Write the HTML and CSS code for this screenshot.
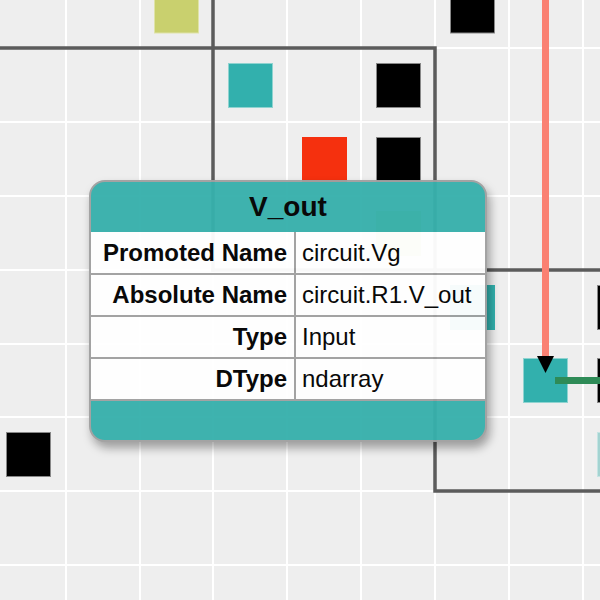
FILE: index.html
```html
<!DOCTYPE html>
<html>
<head>
<meta charset="utf-8">
<link rel="stylesheet" href="styles.css">
</head>
<body>
<div class="canvas">
  <svg class="n2" width="600" height="600" viewBox="0 0 600 600">
    <rect x="0" y="0" width="600" height="600" fill="#eeeeee"/>
    <g stroke="#ffffff" stroke-width="2">
      <line x1="66" y1="0" x2="66" y2="600"/>
      <line x1="140" y1="0" x2="140" y2="600"/>
      <line x1="213" y1="0" x2="213" y2="600"/>
      <line x1="287" y1="0" x2="287" y2="600"/>
      <line x1="361" y1="0" x2="361" y2="600"/>
      <line x1="435" y1="0" x2="435" y2="600"/>
      <line x1="509" y1="0" x2="509" y2="600"/>
      <line x1="583" y1="0" x2="583" y2="600"/>
      <line x1="0" y1="48" x2="600" y2="48"/>
      <line x1="0" y1="122" x2="600" y2="122"/>
      <line x1="0" y1="196" x2="600" y2="196"/>
      <line x1="0" y1="270" x2="600" y2="270"/>
      <line x1="0" y1="344" x2="600" y2="344"/>
      <line x1="0" y1="417" x2="600" y2="417"/>
      <line x1="0" y1="491" x2="600" y2="491"/>
      <line x1="0" y1="565" x2="600" y2="565"/>
    </g>
    <g stroke="#aaaaaa" stroke-width="1">
      <rect x="154.5" y="-11" width="44" height="44" fill="#c9d06e" stroke="#dfe3a8"/>
      <rect x="450.5" y="-11" width="44" height="44" fill="#000000" stroke="#888888"/>
      <rect x="228.5" y="63.5" width="44" height="44" fill="#32b0ad" stroke="#8fd3d0"/>
      <rect x="376.5" y="63.5" width="44" height="44" fill="#000000" stroke="#888888"/>
      <rect x="302.5" y="137.5" width="44" height="44" fill="#f5300e" stroke="#f5300e"/>
      <rect x="376.5" y="137.5" width="44" height="44" fill="#000000" stroke="#888888"/>
      <rect x="376.5" y="211.5" width="44" height="44" fill="#c9d06e" stroke="#c9d06e"/>
      <rect x="450.5" y="285.5" width="44" height="44" fill="#32b0ad" stroke="#32b0ad"/>
      <rect x="597.5" y="285.5" width="44" height="44" fill="#000000" stroke="#888888"/>
      <rect x="523.5" y="358.5" width="44" height="44" fill="#32b0ad" stroke="#8fd3d0"/>
      <rect x="597.5" y="358.5" width="44" height="44" fill="#000000" stroke="#888888"/>
      <rect x="6.5" y="432.5" width="44" height="44" fill="#000000" stroke="#888888"/>
      <rect x="597.5" y="432.5" width="44" height="44" fill="#a3d3d1" stroke="#c6e4e3"/>
    </g>
    <g stroke="#5b5b5b" stroke-width="3.5" fill="none" stroke-linecap="square">
      <polyline points="0,48 435,48 435,491 600,491"/>
      <line x1="213" y1="0" x2="213" y2="270"/>
      <line x1="213" y1="270" x2="600" y2="270"/>
    </g>
    <line x1="545.5" y1="0" x2="545.5" y2="358" stroke="#fa8072" stroke-width="7"/>
    <line x1="555" y1="380.5" x2="600" y2="380.5" stroke="#2e8b57" stroke-width="7"/>
    <polygon points="537,356 554,356 545.5,373" fill="#000000"/>
  </svg>

  <div class="tooltip">
    <div class="tt-head">V_out</div>
    <table class="tt-table">
      <tr><th>Promoted Name</th><td>circuit.Vg</td></tr>
      <tr><th>Absolute Name</th><td>circuit.R1.V_out</td></tr>
      <tr><th>Type</th><td>Input</td></tr>
      <tr><th>DType</th><td>ndarray</td></tr>
    </table>
    <div class="tt-foot"></div>
  </div>
</div>
</body>
</html>
```

FILE: styles.css
```css
html, body {
  margin: 0;
  padding: 0;
  background: #eeeeee;
}

.canvas {
  position: relative;
  width: 600px;
  height: 600px;
  overflow: hidden;
  font-family: "Liberation Sans", Arial, sans-serif;
}

.n2 {
  display: block;
}

.tooltip {
  position: absolute;
  left: 89px;
  top: 180px;
  width: 394px;
  border: 2px solid #a0a0a0;
  border-radius: 16px;
  background: #37b0ac;
  overflow: hidden;
  opacity: 0.96;
  box-shadow: 3px 6px 10px rgba(0, 0, 0, 0.35);
  display: flex;
  flex-direction: column;
}

.tt-head {
  height: 50px;
  line-height: 50px;
  text-align: center;
  font-size: 28px;
  font-weight: bold;
  color: #000000;
}

.tt-table {
  border-collapse: collapse;
  width: 100%;
  background: #ffffff;
  font-size: 24px;
  color: #000000;
}

.tt-table th,
.tt-table td {
  height: 40px;
  padding: 0;
  border: 2px solid #a0a0a0;
  white-space: nowrap;
}

.tt-table tr:first-child th,
.tt-table tr:first-child td {
  border-top: none;
  height: 41px;
}

.tt-table th {
  width: 196px;
  text-align: right;
  padding-right: 7px;
  font-weight: bold;
  border-left: none;
}

.tt-table td {
  text-align: left;
  padding-left: 6px;
  font-weight: normal;
  border-right: none;
}

.tt-foot {
  height: 39px;
}
```
